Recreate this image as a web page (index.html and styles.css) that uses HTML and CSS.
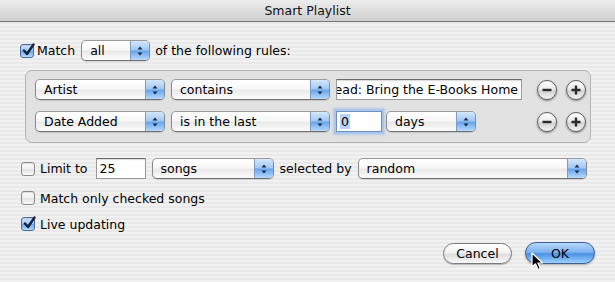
FILE: index.html
```html
<!DOCTYPE html>
<html>
<head>
<meta charset="utf-8">
<link rel="stylesheet" href="styles.css">
</head>
<body>
<div class="dialog">
  <div class="titlebar">Smart Playlist</div>
  <div class="main">
    <div class="row row-match">
      <span class="cb checked"><svg class="tick" viewBox="0 0 14 14" width="14" height="14"><path d="M3 7.5 L6 11 L12.5 1.5" fill="none" stroke="#16213a" stroke-width="2.4" stroke-linecap="round" stroke-linejoin="round"/></svg></span>
      <span class="lbl">Match</span>
      <div class="popup w-all"><span class="plabel">all</span><span class="parrow"><svg viewBox="0 0 8 14" width="8" height="14"><path d="M4 2.5 L6.5 5.5 L1.5 5.5 Z M4 11.5 L6.5 8.5 L1.5 8.5 Z" fill="#1a2b48"/></svg></span></div>
      <span class="lbl">of the following rules:</span>
    </div>

    <div class="rules">
      <div class="rule">
        <div class="popup w-field"><span class="plabel">Artist</span><span class="parrow"><svg viewBox="0 0 8 14" width="8" height="14"><path d="M4 2.5 L6.5 5.5 L1.5 5.5 Z M4 11.5 L6.5 8.5 L1.5 8.5 Z" fill="#1a2b48"/></svg></span></div>
        <div class="popup w-op"><span class="plabel">contains</span><span class="parrow"><svg viewBox="0 0 8 14" width="8" height="14"><path d="M4 2.5 L6.5 5.5 L1.5 5.5 Z M4 11.5 L6.5 8.5 L1.5 8.5 Z" fill="#1a2b48"/></svg></span></div>
        <div class="field w-text scrolled"><span>Read: Bring the E-Books Home</span></div>
        <div class="round-btns">
          <span class="round"><svg viewBox="0 0 20 20" width="20" height="20"><path d="M5.5 10 H14.5" stroke="#2a2a2a" stroke-width="2.4"/></svg></span>
          <span class="round"><svg viewBox="0 0 20 20" width="20" height="20"><path d="M5.5 10 H14.5 M10 5.5 V14.5" stroke="#2a2a2a" stroke-width="2.4"/></svg></span>
        </div>
      </div>
      <div class="rule">
        <div class="popup w-field"><span class="plabel">Date Added</span><span class="parrow"><svg viewBox="0 0 8 14" width="8" height="14"><path d="M4 2.5 L6.5 5.5 L1.5 5.5 Z M4 11.5 L6.5 8.5 L1.5 8.5 Z" fill="#1a2b48"/></svg></span></div>
        <div class="popup w-op"><span class="plabel">is in the last</span><span class="parrow"><svg viewBox="0 0 8 14" width="8" height="14"><path d="M4 2.5 L6.5 5.5 L1.5 5.5 Z M4 11.5 L6.5 8.5 L1.5 8.5 Z" fill="#1a2b48"/></svg></span></div>
        <div class="field w-num focused"><span class="sel">0</span></div>
        <div class="popup w-days"><span class="plabel">days</span><span class="parrow"><svg viewBox="0 0 8 14" width="8" height="14"><path d="M4 2.5 L6.5 5.5 L1.5 5.5 Z M4 11.5 L6.5 8.5 L1.5 8.5 Z" fill="#1a2b48"/></svg></span></div>
        <div class="round-btns">
          <span class="round"><svg viewBox="0 0 20 20" width="20" height="20"><path d="M5.5 10 H14.5" stroke="#2a2a2a" stroke-width="2.4"/></svg></span>
          <span class="round"><svg viewBox="0 0 20 20" width="20" height="20"><path d="M5.5 10 H14.5 M10 5.5 V14.5" stroke="#2a2a2a" stroke-width="2.4"/></svg></span>
        </div>
      </div>
    </div>

    <div class="row row-limit">
      <span class="cb"></span>
      <span class="lbl">Limit to</span>
      <div class="field w-limit"><span>25</span></div>
      <div class="popup w-songs"><span class="plabel">songs</span><span class="parrow"><svg viewBox="0 0 8 14" width="8" height="14"><path d="M4 2.5 L6.5 5.5 L1.5 5.5 Z M4 11.5 L6.5 8.5 L1.5 8.5 Z" fill="#1a2b48"/></svg></span></div>
      <span class="lbl">selected by</span>
      <div class="popup w-random"><span class="plabel">random</span><span class="parrow"><svg viewBox="0 0 8 14" width="8" height="14"><path d="M4 2.5 L6.5 5.5 L1.5 5.5 Z M4 11.5 L6.5 8.5 L1.5 8.5 Z" fill="#1a2b48"/></svg></span></div>
    </div>

    <div class="row row-check row-only">
      <span class="cb"></span>
      <span class="lbl">Match only checked songs</span>
    </div>
    <div class="row row-check row-live">
      <span class="cb checked"><svg class="tick" viewBox="0 0 14 14" width="14" height="14"><path d="M3 7.5 L6 11 L12.5 1.5" fill="none" stroke="#16213a" stroke-width="2.4" stroke-linecap="round" stroke-linejoin="round"/></svg></span>
      <span class="lbl">Live updating</span>
    </div>

    <div class="buttons">
      <span class="btn cancel">Cancel</span>
      <span class="btn ok">OK</span>
    </div>
  </div>
  <svg class="cursor" viewBox="0 0 14 20" width="14" height="20"><path d="M1 1 L1 15 L4.5 11.8 L7 17.5 L9.3 16.5 L6.9 11 L11.5 11 Z" fill="#000" stroke="#fff" stroke-width="1.2" stroke-linejoin="round"/></svg>
</div>
</body>
</html>
```

FILE: styles.css
```css
html, body {
  margin: 0;
  padding: 0;
}
body {
  width: 615px;
  height: 282px;
  overflow: hidden;
  font-family: "DejaVu Sans", "Liberation Sans", sans-serif;
  font-size: 12.5px;
  color: #000;
  background: repeating-linear-gradient(180deg, #f1f1f1 0px, #f1f1f1 2px, #e9e9e9 2px, #e9e9e9 4px);
}
.dialog {
  position: relative;
  width: 615px;
  height: 282px;
}
.titlebar {
  height: 21px;
  line-height: 21px;
  text-align: center;
  font-size: 12.5px;
  color: #111;
  background: linear-gradient(180deg, #ececec 0%, #dedede 50%, #cdcdcd 100%);
  border-bottom: 1px solid #777;
}
.main {
  display: flex;
  flex-direction: column;
  padding: 18px 0 0 21px;
}
.row {
  display: flex;
  align-items: center;
  height: 21px;
}
.lbl {
  white-space: nowrap;
}
.row-match .cb { margin: 0 3px 0 -1px; }
.row-match .w-all { margin: 0 5px 0 6px; }

.cb {
  position: relative;
  width: 14px;
  height: 14px;
  box-sizing: border-box;
  border: 1px solid #8b8b8b;
  border-radius: 3px;
  background: linear-gradient(180deg, #fdfdfd 0%, #efefef 50%, #e2e2e2 55%, #f9f9f9 100%);
  box-shadow: inset 0 1px 1px rgba(0,0,0,0.12);
  flex: none;
}
.cb.checked {
  border-color: #4b6d9f;
  background: linear-gradient(180deg, #d6e8fc 0%, #9ec7f4 45%, #6fa9ec 55%, #b8dafc 100%);
}
.tick {
  position: absolute;
  left: 0;
  top: -2px;
}

.popup {
  display: flex;
  height: 21px;
  box-sizing: border-box;
  border: 1px solid #8a8a8a;
  border-top-color: #9a9a9a;
  border-bottom-color: #6f6f6f;
  border-radius: 5px;
  background: linear-gradient(180deg, #ffffff 0%, #f7f7f7 45%, #e9e9e9 55%, #fbfbfb 100%);
  overflow: hidden;
  flex: none;
  box-shadow: 0 1px 1px rgba(0,0,0,0.12);
}
.plabel {
  flex: 1;
  padding-left: 8px;
  line-height: 19px;
  white-space: nowrap;
  overflow: hidden;
}
.parrow {
  width: 18px;
  display: flex;
  align-items: center;
  justify-content: center;
  border-left: 1px solid #7f9ac4;
  background: linear-gradient(180deg, #d5e7fb 0%, #a2c9f3 45%, #6aa6ec 55%, #b6d9fb 100%);
}
.w-all { width: 69px; }
.w-field { width: 130px; }
.w-op { width: 159px; }
.w-days { width: 90px; }
.w-songs { width: 122px; }
.w-random { width: 229px; }

.field {
  display: flex;
  align-items: center;
  height: 21px;
  box-sizing: border-box;
  border: 1px solid #9a9a9a;
  border-top-color: #6c6c6c;
  background: #fff;
  box-shadow: inset 0 1px 1px rgba(0,0,0,0.15);
  padding-left: 3px;
  overflow: hidden;
  white-space: nowrap;
  flex: none;
}
.field.scrolled {
  justify-content: flex-end;
  padding: 0 3px 0 0;
}
.w-text { width: 186px; height: 21px; }
.w-num { width: 46px; }
.w-limit { width: 50px; }
.focused {
  border-color: #6f8fbf;
  box-shadow: 0 0 0 2px #a9c7ee, 0 0 2px 3px rgba(110,160,230,0.35);
}
.sel {
  background: #b6d3fb;
  padding: 0 1px;
}

.rules {
  margin: 9px 0 0 4px;
  width: 566px;
  height: 73px;
  box-sizing: border-box;
  border: 1px solid #b3b3b3;
  border-radius: 7px;
  background: #e1e1e1;
  padding: 8px 0 0 9px;
  display: flex;
  flex-direction: column;
  gap: 11px;
}
.rule {
  display: flex;
  align-items: center;
  gap: 6px;
  height: 21px;
}
.rule .w-days { margin-left: -2px; }
.round-btns {
  display: flex;
  gap: 9px;
  margin-left: auto;
  margin-right: 4px;
}
.round {
  width: 20px;
  height: 20px;
  box-sizing: border-box;
  border: 1px solid #5f5f5f;
  border-radius: 50%;
  background: linear-gradient(180deg, #ffffff 0%, #ececec 45%, #d2d2d2 55%, #f4f4f4 100%);
  box-shadow: 0 1px 2px rgba(0,0,0,0.45);
  display: flex;
  align-items: center;
  justify-content: center;
}
.round svg { margin: -1px; }

.row-limit {
  margin-top: 15px;
}
.row-limit .cb { margin-right: 5px; }
.row-limit .field { margin-left: 8px; }
.row-limit .w-songs { margin: 0 6px 0 6px; }
.row-limit .w-random { margin-left: 6px; }

.row-check {
  height: 16px;
}
.row-check .cb { margin-right: 5px; }
.row-only { margin-top: 11px; }
.row-live { margin-top: 10px; }

.buttons {
  margin-top: 10px;
  display: flex;
  justify-content: flex-end;
  align-items: center;
  gap: 13px;
  padding-right: 20px;
}
.btn {
  display: flex;
  align-items: center;
  justify-content: center;
  height: 21px;
  box-sizing: border-box;
  border-radius: 11px;
  flex: none;
}
.cancel {
  width: 69px;
  border: 1px solid #7a7a7a;
  background: linear-gradient(180deg, #ffffff 0%, #f2f2f2 45%, #dedede 55%, #f8f8f8 100%);
  box-shadow: 0 1px 1px rgba(0,0,0,0.25);
}
.ok {
  width: 70px;
  height: 22px;
  border: 1px solid #3b5e93;
  background: linear-gradient(180deg, #b5d6fa 0%, #7fb3ef 45%, #4a92e6 55%, #9fd0fb 100%);
  box-shadow: 0 1px 2px rgba(0,0,0,0.3);
}
.cursor {
  position: absolute;
  left: 531px;
  top: 252px;
}
```
